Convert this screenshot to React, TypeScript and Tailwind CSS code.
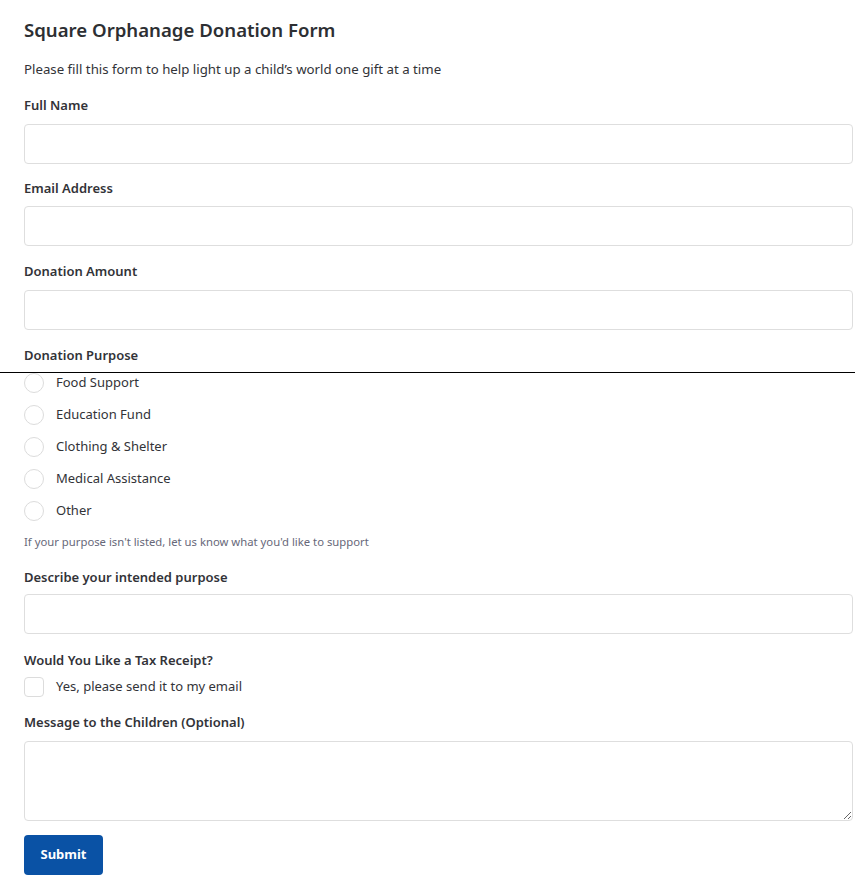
import { useState } from 'react';

const purposes = ['Food Support', 'Education Fund', 'Clothing & Shelter', 'Medical Assistance', 'Other'];

const Label = ({ children }: { children: React.ReactNode }) => (
  <label className="block text-[13px] leading-5 font-semibold text-[#323338]">{children}</label>
);

const TextField = ({ type = 'text', gap = 'mt-[9px]' }: { type?: string; gap?: string }) => (
  <input
    type={type}
    className={`${gap} block h-10 w-full rounded-[4px] border border-[#dedede] bg-white px-3 text-[13px] outline-none focus:border-[#0b52a3]`}
  />
);

const DonationForm = () => {
  const [purpose, setPurpose] = useState<string | null>(null);
  const [receipt, setReceipt] = useState(false);

  return (
    <main className="min-h-screen bg-white pl-6 pr-[2px] pt-[18px] pb-4 text-[#323338] [font-family:'Noto_Sans',sans-serif]">
      <h1 className="text-[18.6px] leading-6 font-semibold text-[#2d2f33]">Square Orphanage Donation Form</h1>
      <p className="mt-[17px] text-[13.25px] leading-5">
        Please fill this form to help light up a child’s world one gift at a time
      </p>

      <form className="mt-4" onSubmit={(e) => e.preventDefault()}>
        <Label>Full Name</Label>
        <TextField />

        <div className="mt-[14px]">
          <Label>Email Address</Label>
          <TextField type="email" gap="mt-2" />
        </div>

        <div className="mt-[15px]">
          <Label>Donation Amount</Label>
          <TextField />
        </div>

        <div className="mt-[15px]">
          <Label>Donation Purpose</Label>
          <div className="mt-[7px] -ml-6 -mr-[2px] h-px bg-black" />
          <div className="flex flex-col gap-3">
            {purposes.map((p) => (
              <label key={p} className="flex h-5 items-center gap-3 text-[13px] cursor-pointer">
                <span
                  className={`flex h-5 w-5 items-center justify-center rounded-full border ${
                    purpose === p ? 'border-[#0b52a3]' : 'border-[#dcdcdc]'
                  }`}
                >
                  {purpose === p && <span className="h-2.5 w-2.5 rounded-full bg-[#0b52a3]" />}
                </span>
                <input
                  type="radio"
                  name="purpose"
                  className="hidden"
                  checked={purpose === p}
                  onChange={() => setPurpose(p)}
                />
                {p}
              </label>
            ))}
          </div>
          <p className="mt-[13px] text-[11.3px] leading-4 text-[#676879]">
            If your purpose isn't listed, let us know what you'd like to support
          </p>
        </div>

        <div className="mt-[17px]">
          <Label>Describe your intended purpose</Label>
          <input
            type="text"
            className="mt-[7px] block h-10 w-full rounded-[4px] border border-[#dedede] bg-white px-3 text-[13px] outline-none"
          />
        </div>

        <div className="mt-4">
          <Label>Would You Like a Tax Receipt?</Label>
          <label className="mt-[7px] flex h-5 items-center gap-3 text-[13px] cursor-pointer">
            <span
              className={`h-5 w-5 rounded-[4px] border ${receipt ? 'border-[#0b52a3] bg-[#0b52a3]' : 'border-[#dcdcdc]'}`}
            />
            <input type="checkbox" className="hidden" checked={receipt} onChange={(e) => setReceipt(e.target.checked)} />
            Yes, please send it to my email
          </label>
        </div>

        <div className="mt-[15px]">
          <Label>Message to the Children (Optional)</Label>
          <textarea className="mt-[9px] block h-20 w-full rounded-[4px] border border-[#dedede] bg-white px-3 py-2 text-[13px] outline-none" />
        </div>

        <button
          type="submit"
          className="mt-[14px] h-10 w-[79px] rounded-[4px] bg-[#0a52a5] text-[13px] font-bold text-white"
        >
          Submit
        </button>
      </form>
    </main>
  );
};

export default DonationForm;
